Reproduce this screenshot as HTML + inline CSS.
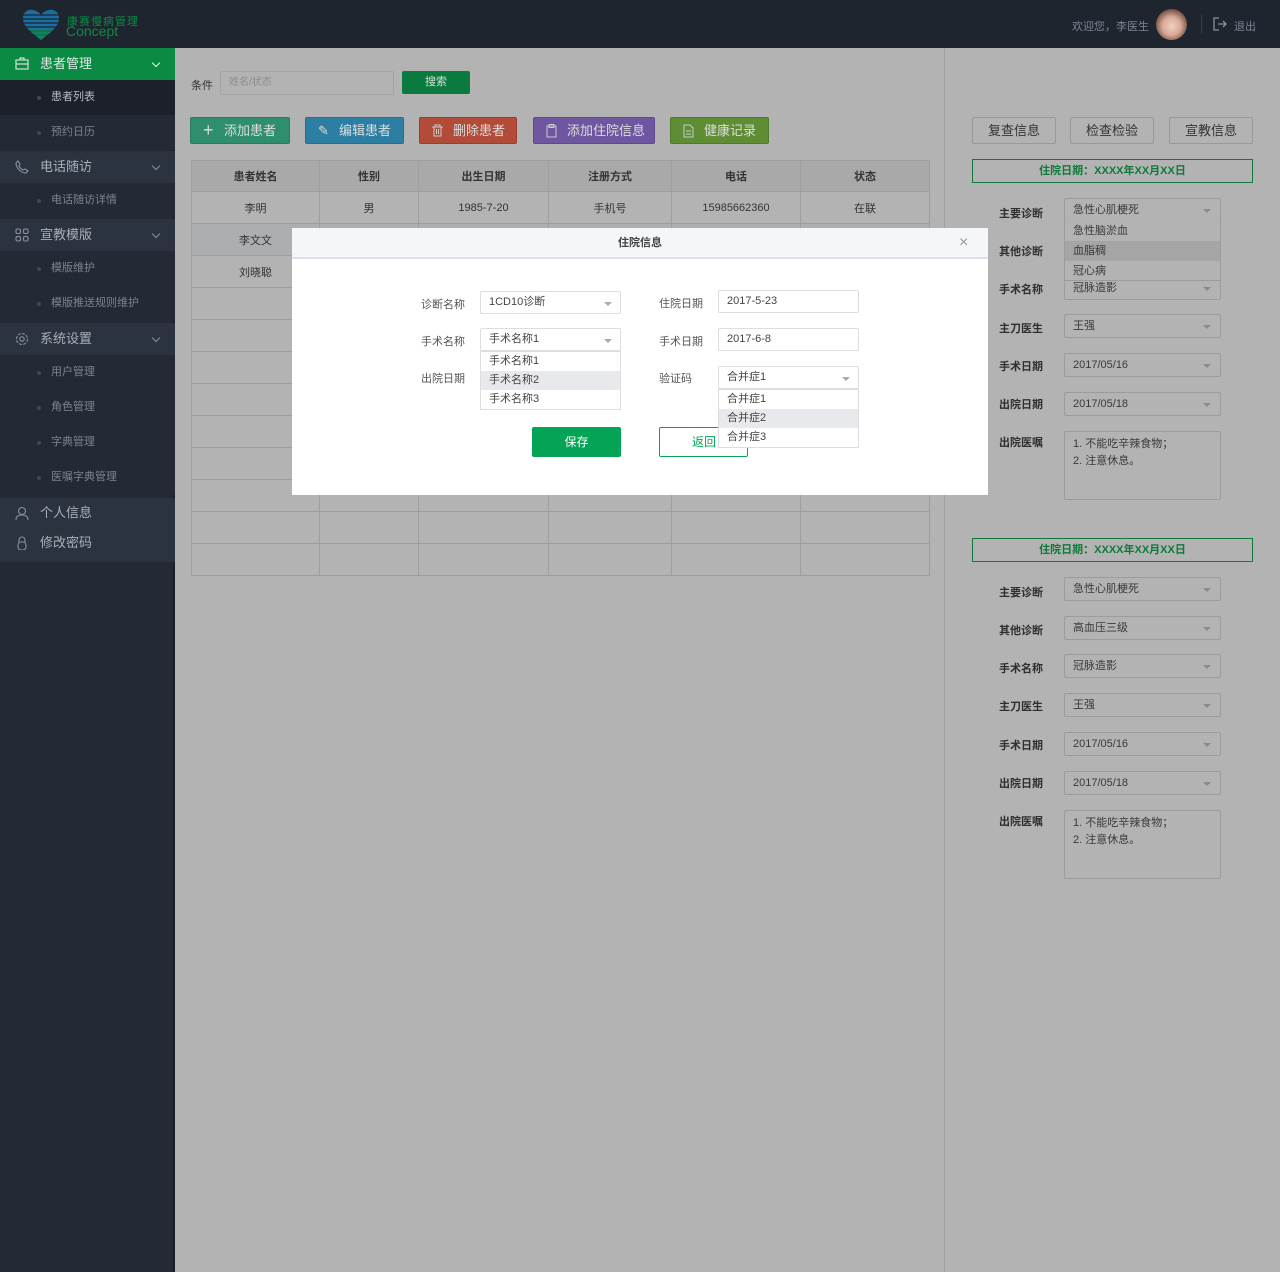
<!DOCTYPE html>
<html><head><meta charset="utf-8">
<style>
*{margin:0;padding:0;box-sizing:border-box}
body{width:1280px;height:1272px;position:relative;background:#b3b3b3;font-family:"Liberation Sans","Noto Sans CJK SC",sans-serif;font-size:12px;color:#333;overflow:hidden}
.a{position:absolute}
#hdr{left:0;top:0;width:1280px;height:48px;background:#1f252f}
#side{left:0;top:48px;width:175px;height:1224px;background:#232a35;border-right:2px solid #1a1f27}
.grp{position:absolute;left:0;width:175px;height:32px;background:#2b3341;color:#aab0b8;font-size:13px;line-height:32px;padding-left:40px}
.sub{position:absolute;left:0;width:175px;height:35px;line-height:35px;padding-left:51px;color:#7c838d;font-size:11px;background:#232a35}
.sub:before{content:"";position:absolute;left:37px;top:16px;width:4px;height:4px;border-radius:2px;background:#3f4854}
.chev{position:absolute;right:16px;top:12px;width:6px;height:6px;border-right:1px solid #8a9099;border-bottom:1px solid #8a9099;transform:rotate(45deg)}
.ico{position:absolute;left:15px;top:9px;width:14px;height:14px}
.btn{position:absolute;top:117px;height:27px;border-radius:2px;color:#ddd;font-size:13px;line-height:25px;padding-left:33px}
table{border-collapse:collapse;position:absolute;left:191px;top:160px}
td{border:1px solid #9e9e9e;height:32px;text-align:center;font-size:11px;color:#333}
.th td{background:#a9a9a9;font-weight:bold;height:31px}
.rl{position:absolute;left:999px;font-weight:bold;font-size:11px;color:#2f2f2f}
.rs{position:absolute;left:1064px;width:157px;height:24px;border:1px solid #9c9c9c;border-radius:2px;line-height:22px;padding-left:8px;font-size:11px;color:#3a3a3a}
.rs:after{content:"";position:absolute;right:9px;top:10px;border:4px solid transparent;border-top:4px solid #8a8a8a}
.rb{position:absolute;top:117px;width:84px;height:27px;border:1px solid #999;border-radius:2px;text-align:center;line-height:25px;font-size:13px;color:#333}
.rh{position:absolute;left:972px;width:281px;height:24px;border:1px solid #0f7a3c;line-height:22px;text-align:center;color:#0e7a3a;font-size:11px;font-weight:bold}
.ta{position:absolute;left:1064px;width:157px;height:69px;border:1px solid #9c9c9c;border-radius:2px;padding:4px 8px;font-size:11px;line-height:17px;color:#3a3a3a}
#modal{left:292px;top:228px;width:696px;height:267px;background:#fff}
.ml{position:absolute;font-size:11px;color:#555}
.mi{position:absolute;width:141px;height:23px;border:1px solid #ddd;border-radius:2px;line-height:21px;padding-left:8px;font-size:11px;color:#444}
.dd:after{content:"";position:absolute;right:8px;top:10px;border:4px solid transparent;border-top:4px solid #aaa}
.op{position:absolute;width:141px;border:1px solid #ddd;background:#fff}
.op div{height:19px;line-height:19px;padding-left:8px;font-size:11px;color:#444}
.op .hl{background:#e8e9ec}
</style></head><body>
<div class="a" id="hdr">
 <svg class="a" style="left:22px;top:9px" width="38" height="32" viewBox="0 0 38 32">
  <path d="M19 31 C10 24 1 18 1 9 C1 3 6 0 11 1 C15 2 18 4 19 6 C20 4 23 2 27 1 C32 0 37 3 37 9 C37 18 28 24 19 31Z" fill="#1a6fa0"/>
  <g stroke="#1f2530" stroke-width="1.2"><line x1="0" y1="6" x2="38" y2="6"/><line x1="0" y1="10" x2="38" y2="10"/><line x1="0" y1="14" x2="38" y2="14"/><line x1="0" y1="18" x2="38" y2="18"/><line x1="0" y1="22" x2="38" y2="22"/><line x1="0" y1="26" x2="38" y2="26"/></g>
  <path d="M6 20 L32 20 L19 31Z" fill="#0e8a45" opacity=".7"/>
 </svg>
 <div class="a" style="left:67px;top:13px;color:#0c8a45;font-size:11px;letter-spacing:1px">康赛慢病管理</div>
 <div class="a" style="left:66px;top:23px;color:#0c8a45;font-size:14px;line-height:16px">Concept</div>
 <div class="a" style="left:1072px;top:18px;color:#7d8591;font-size:11px">欢迎您，李医生</div>
 <div class="a" style="left:1156px;top:9px;width:31px;height:31px;border-radius:50%;background:radial-gradient(circle at 50% 55%,#f0d0c0 0,#d8a898 40%,#6a4a3a 75%)"></div>
 <div class="a" style="left:1201px;top:14px;width:1px;height:20px;background:#353c47"></div>
 <svg class="a" style="left:1213px;top:17px" width="15" height="14" viewBox="0 0 15 14"><path d="M6 1H1V13H6" fill="none" stroke="#8a919b" stroke-width="1.3"/><path d="M5 7H13M10 4L13 7L10 10" fill="none" stroke="#8a919b" stroke-width="1.3"/></svg>
 <div class="a" style="left:1234px;top:18px;color:#7d8591;font-size:11px">退出</div>
</div>
<div class="a" id="side">
 <div class="grp" style="top:0;background:#0b8a43;color:#e0e8e3">患者管理<svg class="ico" viewBox="0 0 14 14"><rect x="1" y="3" width="12" height="9" fill="none" stroke="#d0e0d5" stroke-width="1.2"/><path d="M5 3V1H9V3M1 7H13" fill="none" stroke="#d0e0d5" stroke-width="1.2"/></svg><span class="chev" style="border-color:#cfe"></span></div>
 <div class="sub" style="top:32px;background:#1b2029;color:#b8bcc2">患者列表</div>
 <div class="sub" style="top:67px">预约日历</div>
 <div class="grp" style="top:103px">电话随访<svg class="ico" viewBox="0 0 14 14"><path d="M3 1L5 4L4 6C5 8 6 9 8 10L10 9L13 11L11 13C6 13 1 8 1 3Z" fill="none" stroke="#8a919b" stroke-width="1.1"/></svg><span class="chev"></span></div>
 <div class="sub" style="top:135px">电话随访详情</div>
 <div class="grp" style="top:171px">宣教模版<svg class="ico" viewBox="0 0 14 14"><g fill="none" stroke="#8a919b" stroke-width="1.1"><rect x="1" y="1" width="4.5" height="4.5" rx="1.5"/><rect x="8.5" y="1" width="4.5" height="4.5" rx="1.5"/><rect x="1" y="8.5" width="4.5" height="4.5" rx="1.5"/><rect x="8.5" y="8.5" width="4.5" height="4.5" rx="1.5"/></g></svg><span class="chev"></span></div>
 <div class="sub" style="top:203px">模版维护</div>
 <div class="sub" style="top:238px">模版推送规则维护</div>
 <div class="grp" style="top:275px">系统设置<svg class="ico" viewBox="0 0 14 14"><circle cx="7" cy="7" r="2.2" fill="none" stroke="#8a919b" stroke-width="1.1"/><circle cx="7" cy="7" r="5.5" fill="none" stroke="#8a919b" stroke-width="1.1" stroke-dasharray="3 1.3"/></svg><span class="chev"></span></div>
 <div class="sub" style="top:307px">用户管理</div>
 <div class="sub" style="top:342px">角色管理</div>
 <div class="sub" style="top:377px">字典管理</div>
 <div class="sub" style="top:412px">医嘱字典管理</div>
 <div class="grp" style="top:450px;height:64px;line-height:30px;padding-top:0">个人信息<br>修改密码
  <svg class="ico" style="top:8px" viewBox="0 0 14 14"><circle cx="7" cy="5" r="3.5" fill="none" stroke="#8a919b" stroke-width="1.1"/><path d="M1 14C1 10 4 9 7 9C10 9 13 10 13 14" fill="none" stroke="#8a919b" stroke-width="1.1"/></svg>
  <svg class="ico" style="top:38px" viewBox="0 0 14 14"><path d="M4 6V4A3 3 0 0 1 10 4V6" fill="none" stroke="#8a919b" stroke-width="1.1"/><rect x="3" y="6" width="8" height="8" rx="3" fill="none" stroke="#8a919b" stroke-width="1.1"/></svg>
 </div>
</div>
<div class="a" style="left:191px;top:77px;font-size:11px;color:#333">条件</div>
<div class="a" style="left:220px;top:71px;width:174px;height:24px;border:1px solid #a3a3a3;border-radius:2px;font-size:10px;color:#8e8e8e;line-height:22px;padding-left:8px">姓名/状态</div>
<div class="a" style="left:402px;top:71px;width:68px;height:23px;background:#0b7a3e;border-radius:2px;color:#cfe0d6;font-size:11px;text-align:center;line-height:23px">搜索</div>
<div class="btn" style="left:190px;width:100px;background:#2e8e6e;border:1px solid #2a7a60">添加患者<span class="a" style="left:12px;top:0;font-size:18px;line-height:24px">+</span></div>
<div class="btn" style="left:305px;width:99px;background:#2c7ea2;border:1px solid #286f8d">编辑患者<span class="a" style="left:12px;top:0">✎</span></div>
<div class="btn" style="left:419px;width:98px;background:#b24c38;border:1px solid #9a3f2e">删除患者<svg class="a" style="left:12px;top:6px" width="11" height="13"><path d="M0 3H11M3 3V1H8V3M2 3V12H9V3M4.5 5V10M6.5 5V10" fill="none" stroke="#ccc"/></svg></div>
<div class="btn" style="left:533px;width:122px;background:#6e56a0;border:1px solid #5f4a8a">添加住院信息<svg class="a" style="left:12px;top:6px" width="11" height="14"><rect x="1" y="2" width="9" height="11" fill="none" stroke="#ccc"/><rect x="3" y="0.5" width="5" height="3" fill="none" stroke="#ccc"/></svg></div>
<div class="btn" style="left:670px;width:99px;background:#5e8d33;border:1px solid #4f7a2a">健康记录<svg class="a" style="left:12px;top:6px" width="11" height="14"><path d="M1 1H7L10 4V13H1Z M3 7H8M3 10H8" fill="none" stroke="#ccc"/></svg></div>
<table>
<colgroup><col style="width:128px"><col style="width:99px"><col style="width:130px"><col style="width:123px"><col style="width:129px"><col style="width:129px"></colgroup>
<tr class="th"><td>患者姓名</td><td>性别</td><td>出生日期</td><td>注册方式</td><td>电话</td><td>状态</td></tr>
<tr><td>李明</td><td>男</td><td>1985-7-20</td><td>手机号</td><td>15985662360</td><td>在联</td></tr>
<tr style="background:#acaeb1"><td>李文文</td><td></td><td></td><td></td><td></td><td></td></tr>
<tr><td>刘晓聪</td><td></td><td></td><td></td><td></td><td></td></tr>
<tr><td></td><td></td><td></td><td></td><td></td><td></td></tr>
<tr><td></td><td></td><td></td><td></td><td></td><td></td></tr>
<tr><td></td><td></td><td></td><td></td><td></td><td></td></tr>
<tr><td></td><td></td><td></td><td></td><td></td><td></td></tr>
<tr><td></td><td></td><td></td><td></td><td></td><td></td></tr>
<tr><td></td><td></td><td></td><td></td><td></td><td></td></tr>
<tr><td></td><td></td><td></td><td></td><td></td><td></td></tr>
<tr><td></td><td></td><td></td><td></td><td></td><td></td></tr>
<tr><td></td><td></td><td></td><td></td><td></td><td></td></tr>
</table>
<div class="a" style="left:944px;top:48px;width:1px;height:1224px;background:#9f9f9f"></div>
<div class="rb" style="left:972px">复查信息</div>
<div class="rb" style="left:1070px">检查检验</div>
<div class="rb" style="left:1169px">宣教信息</div>
<div class="rh" style="top:159px">住院日期：XXXX年XX月XX日</div>
<div class="rl" style="top:205px">主要诊断</div><div class="rs" style="top:198px">急性心肌梗死</div>
<div class="rl" style="top:243px">其他诊断</div>
<div class="rl" style="top:281px">手术名称</div><div class="rs" style="top:276px">冠脉造影</div>
<div class="a" style="left:1064px;top:221px;width:157px;height:60px;background:#b3b3b3;border:1px solid #9c9c9c;border-top:none;font-size:11px;color:#3a3a3a">
 <div style="height:20px;line-height:20px;padding-left:8px">急性脑淤血</div>
 <div style="height:20px;line-height:20px;padding-left:8px;background:#a5a5a5">血脂稠</div>
 <div style="height:20px;line-height:20px;padding-left:8px">冠心病</div>
</div>
<div class="rl" style="top:320px">主刀医生</div><div class="rs" style="top:314px">王强</div>
<div class="rl" style="top:358px">手术日期</div><div class="rs" style="top:353px">2017/05/16</div>
<div class="rl" style="top:396px">出院日期</div><div class="rs" style="top:392px">2017/05/18</div>
<div class="rl" style="top:434px">出院医嘱</div><div class="ta" style="top:431px">1. 不能吃辛辣食物；<br>2. 注意休息。</div>
<div class="rh" style="top:538px">住院日期：XXXX年XX月XX日</div>
<div class="rl" style="top:584px">主要诊断</div><div class="rs" style="top:577px">急性心肌梗死</div>
<div class="rl" style="top:622px">其他诊断</div><div class="rs" style="top:616px">高血压三级</div>
<div class="rl" style="top:660px">手术名称</div><div class="rs" style="top:654px">冠脉造影</div>
<div class="rl" style="top:698px">主刀医生</div><div class="rs" style="top:693px">王强</div>
<div class="rl" style="top:737px">手术日期</div><div class="rs" style="top:732px">2017/05/16</div>
<div class="rl" style="top:775px">出院日期</div><div class="rs" style="top:771px">2017/05/18</div>
<div class="rl" style="top:813px">出院医嘱</div><div class="ta" style="top:810px">1. 不能吃辛辣食物；<br>2. 注意休息。</div>

<div class="a" id="modal">
 <div class="a" style="left:0;top:0;width:696px;height:31px;background:#f5f6f9;border-bottom:2px solid #dde0e6;text-align:center;line-height:30px;font-size:11px;font-weight:bold;color:#444">住院信息</div>
 <div class="a" style="left:667px;top:6px;font-size:16px;color:#999">×</div>
 <div class="ml" style="left:129px;top:68px">诊断名称</div>
 <div class="mi dd" style="left:188px;top:63px">1CD10诊断</div>
 <div class="ml" style="left:367px;top:67px">住院日期</div>
 <div class="mi" style="left:426px;top:62px;width:141px">2017-5-23</div>
 <div class="ml" style="left:129px;top:105px">手术名称</div>
 <div class="mi dd" style="left:188px;top:100px">手术名称1</div>
 <div class="ml" style="left:367px;top:105px">手术日期</div>
 <div class="mi" style="left:426px;top:100px">2017-6-8</div>
 <div class="ml" style="left:129px;top:142px">出院日期</div>
 <div class="op" style="left:188px;top:123px"><div>手术名称1</div><div class="hl">手术名称2</div><div>手术名称3</div></div>
 <div class="ml" style="left:367px;top:142px">验证码</div>
 <div class="a" style="left:240px;top:199px;width:89px;height:30px;background:#05a356;border-radius:2px;color:#fff;text-align:center;line-height:30px;font-size:12px">保存</div>
 <div class="a" style="left:367px;top:199px;width:89px;height:30px;border:1px solid #05a356;border-radius:2px;color:#05a356;line-height:28px;padding-left:32px;font-size:12px">返回</div>
 <div class="mi dd" style="left:426px;top:138px">合并症1</div>
 <div class="op" style="left:426px;top:161px"><div>合并症1</div><div class="hl">合并症2</div><div>合并症3</div></div>
</div>
</body></html>
